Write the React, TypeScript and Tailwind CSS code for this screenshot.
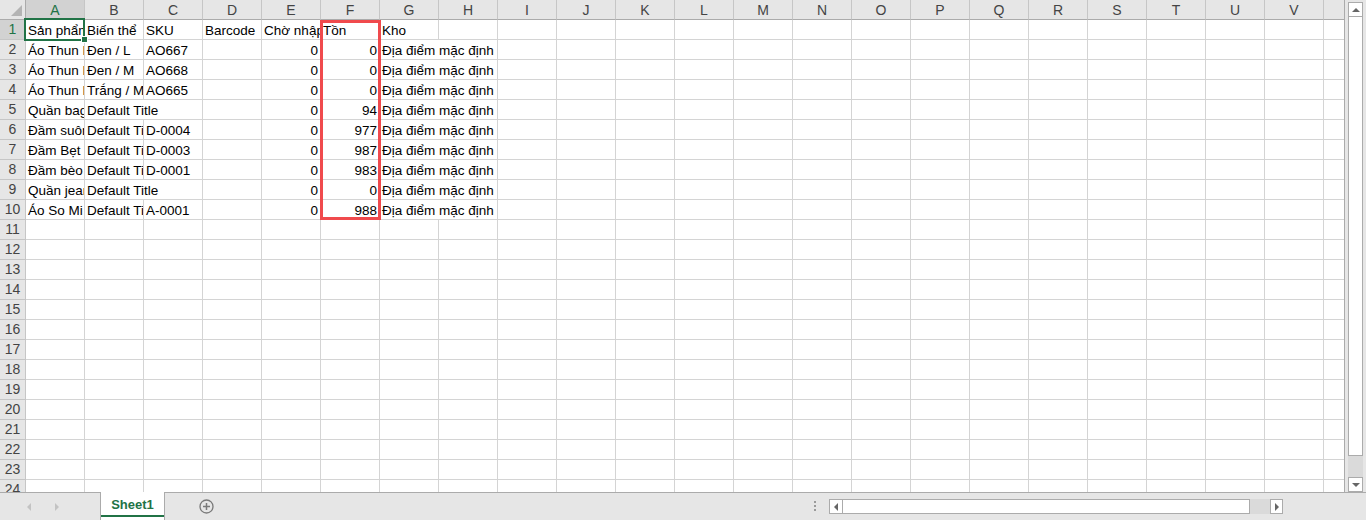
type Cell = { t?: string; n?: boolean; span?: number };

const COLS = 'ABCDEFGHIJKLMNOPQRSTUVW'.split('');
const TOTAL = COLS.length;

const rows: Cell[][] = [
    [{ t: 'Sản phẩm' }, { t: 'Biến thể' }, { t: 'SKU' }, { t: 'Barcode' }, { t: 'Chờ nhập' }, { t: 'Tồn' }, { t: 'Kho' }],
    [{ t: 'Áo Thun Nam Basic' }, { t: 'Đen / L' }, { t: 'AO667' }, {}, { t: '0', n: true }, { t: '0', n: true }, { t: 'Địa điểm mặc định', span: 2 }],
    [{ t: 'Áo Thun Nam Basic' }, { t: 'Đen / M' }, { t: 'AO668' }, {}, { t: '0', n: true }, { t: '0', n: true }, { t: 'Địa điểm mặc định', span: 2 }],
    [{ t: 'Áo Thun Nam Basic' }, { t: 'Trắng / M' }, { t: 'AO665' }, {}, { t: '0', n: true }, { t: '0', n: true }, { t: 'Địa điểm mặc định', span: 2 }],
    [{ t: 'Quần baggy' }, { t: 'Default Title', span: 2 }, {}, { t: '0', n: true }, { t: '94', n: true }, { t: 'Địa điểm mặc định', span: 2 }],
    [{ t: 'Đầm suông' }, { t: 'Default Title' }, { t: 'D-0004' }, {}, { t: '0', n: true }, { t: '977', n: true }, { t: 'Địa điểm mặc định', span: 2 }],
    [{ t: 'Đầm Bẹt Vai' }, { t: 'Default Title' }, { t: 'D-0003' }, {}, { t: '0', n: true }, { t: '987', n: true }, { t: 'Địa điểm mặc định', span: 2 }],
    [{ t: 'Đầm bèo' }, { t: 'Default Title' }, { t: 'D-0001' }, {}, { t: '0', n: true }, { t: '983', n: true }, { t: 'Địa điểm mặc định', span: 2 }],
    [{ t: 'Quần jeans' }, { t: 'Default Title', span: 2 }, {}, { t: '0', n: true }, { t: '0', n: true }, { t: 'Địa điểm mặc định', span: 2 }],
    [{ t: 'Áo So Mi' }, { t: 'Default Title' }, { t: 'A-0001' }, {}, { t: '0', n: true }, { t: '988', n: true }, { t: 'Địa điểm mặc định', span: 2 }],
];

function fillRow(cells: Cell[]): Cell[] {
    const used = cells.reduce((s, c) => s + (c.span ?? 1), 0);
    return [...cells, ...Array.from({ length: TOTAL - used }, () => ({}))];
}

function Tri({ dir, className }: { dir: 'up' | 'down' | 'left' | 'right'; className?: string }) {
    const pts = {
        up: '0,4 8,4 4,0',
        down: '0,0 8,0 4,4',
        left: '4,0 4,8 0,4',
        right: '0,0 0,8 4,4',
    }[dir];
    const vertical = dir === 'up' || dir === 'down';
    return (
        <svg width={vertical ? 8 : 4} height={vertical ? 4 : 8} className={className}>
            <polygon points={pts} fill="currentColor" />
        </svg>
    );
}

function SheetRow({ num, cells }: { num: number; cells: Cell[] }) {
    const active = num === 1;
    return (
        <div className="flex h-[20px] shrink-0">
            <div
                className={`w-[26px] shrink-0 border-r border-b border-[#c6c6c6] text-center leading-[19px] ${
                    active ? 'bg-[#d2d2d2] text-[#217346]' : 'bg-[#e6e6e6] text-[#444]'
                }`}
            >
                {num}
            </div>
            {fillRow(cells).map((c, i) => (
                <div
                    key={i}
                    className={`shrink-0 overflow-hidden whitespace-nowrap border-r border-b border-[#d4d4d4] px-[2px] pt-[1px] text-[13.5px] leading-[19px] text-black ${
                        c.span === 2 ? 'w-[118px]' : 'w-[59px]'
                    } ${c.n ? 'text-right' : 'text-left'}`}
                >
                    {c.t}
                </div>
            ))}
        </div>
    );
}

export default function App() {
    const emptyRows = Array.from({ length: 14 }, (_, i) => i + 11);

    return (
        <div className="flex h-[520px] w-[1366px] flex-col overflow-hidden bg-[#e6e6e6] font-['Liberation_Sans',Arial,sans-serif] text-[14px]">
            <div className="flex h-[492px] shrink-0">
                {/* grid */}
                <div className="relative h-[492px] w-[1345px] shrink-0 overflow-hidden border-r border-[#ababab] bg-white">
                    <div className="flex h-[20px] shrink-0 bg-[#e6e6e6]">
                        <div className="relative w-[26px] shrink-0 border-r border-b border-[#ababab]">
                            <svg width="26" height="20" className="absolute left-0 top-0">
                                <polygon points="22,5 22,16 11,16" fill="#b4b4b4" />
                            </svg>
                        </div>
                        {COLS.map((c) => (
                            <div
                                key={c}
                                className={`w-[59px] shrink-0 border-r border-b border-[#c6c6c6] border-b-[#ababab] pt-[1px] text-center leading-[18px] ${
                                    c === 'A' ? 'bg-[#d2d2d2] text-[#217346]' : 'text-[#444]'
                                }`}
                            >
                                {c === 'W' ? '' : c}
                            </div>
                        ))}
                    </div>
                    {rows.map((r, i) => (
                        <SheetRow key={i} num={i + 1} cells={r} />
                    ))}
                    {emptyRows.map((n) => (
                        <SheetRow key={n} num={n} cells={[]} />
                    ))}

                    {/* selected cell A1 */}
                    <div className="absolute left-[24px] top-[18px] h-[23px] w-[61px] border-2 border-[#217346]" />
                    <div className="absolute left-[81px] top-[36px] h-[7px] w-[7px] border border-white bg-[#217346]" />

                    {/* highlight on column F */}
                    <div className="absolute left-[320px] top-[20px] h-[200px] w-[61px] border-[3px] border-[#f04a4d]" />
                </div>

                {/* vertical scrollbar */}
                <div className="flex w-[21px] shrink-0 flex-col pl-[3px] pt-[2px]">
                    <div className="flex h-[15px] w-[15px] items-center justify-center border border-[#ababab] bg-white text-[#666]">
                        <Tri dir="up" />
                    </div>
                    <div className="h-[439px] w-[15px] border-x border-b border-[#ababab] bg-white" />
                    <div className="h-[21px] w-[15px] bg-[#dadada]" />
                    <div className="flex h-[15px] w-[15px] items-center justify-center border border-[#ababab] bg-white text-[#666]">
                        <Tri dir="down" />
                    </div>
                </div>
            </div>

            {/* sheet tabs + horizontal scrollbar */}
            <div className="flex h-[28px] shrink-0 items-start border-t border-[#ababab]">
                <div className="flex h-[27px] w-[100px] shrink-0 items-center">
                    <Tri dir="left" className="ml-[27px] text-[#c3c3c3]" />
                    <Tri dir="right" className="ml-[24px] text-[#c3c3c3]" />
                </div>
                <div className="relative -mt-px flex h-[28px] w-[65px] shrink-0 items-center justify-center border-x border-[#ababab] bg-white pb-[3px] text-[13px] font-bold text-[#217346]">
                    Sheet1
                    <div className="absolute bottom-[3px] left-0 h-[2px] w-full bg-[#217346]" />
                </div>
                <div className="ml-[34px] mt-[6px] shrink-0">
                    <svg width="15" height="15" viewBox="0 0 15 15">
                        <circle cx="7.5" cy="7.5" r="6.5" fill="none" stroke="#7a7a7a" strokeWidth="1.3" />
                        <path d="M7.5 4v7M4 7.5h7" stroke="#7a7a7a" strokeWidth="1.5" />
                    </svg>
                </div>
                <div className="flex-1" />
                <div className="mt-[8px] flex shrink-0 flex-col gap-[2px]">
                    <div className="h-[2px] w-[2px] bg-[#9a9a9a]" />
                    <div className="h-[2px] w-[2px] bg-[#9a9a9a]" />
                    <div className="h-[2px] w-[2px] bg-[#9a9a9a]" />
                </div>
                <div className="ml-[13px] mt-[6px] flex h-[15px] w-[454px] shrink-0">
                    <div className="flex h-[15px] w-[14px] items-center justify-center border border-[#ababab] bg-white text-[#666]">
                        <Tri dir="left" />
                    </div>
                    <div className="h-[15px] w-[407px] border-y border-r border-[#ababab] bg-white" />
                    <div className="h-[15px] w-[20px] bg-[#dadada]" />
                    <div className="flex h-[15px] w-[13px] items-center justify-center border border-[#ababab] bg-white text-[#666]">
                        <Tri dir="right" />
                    </div>
                </div>
                <div className="w-[83px] shrink-0" />
            </div>
        </div>
    );
}
